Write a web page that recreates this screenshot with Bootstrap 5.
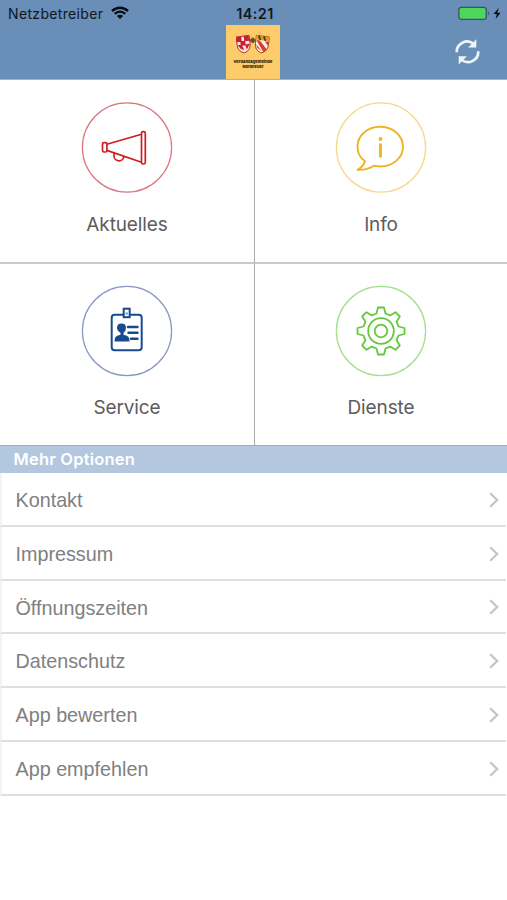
<!DOCTYPE html>
<html lang="de">
<head>
<meta charset="utf-8">
<meta name="viewport" content="width=device-width, initial-scale=1">
<title>Start</title>
<link href="https://cdn.jsdelivr.net/npm/bootstrap@5.3.0/dist/css/bootstrap.min.css" rel="stylesheet">
<style>
body{font-family:Inter,"Liberation Sans",sans-serif;background:#fff;height:900px;overflow:hidden}
svg{display:block;flex:none}
.app-head{height:80px;background:#698fb8;border-bottom:1px solid #a9b3c0}
.statusline{height:25px;padding:3px 5px 0 8px;font-size:14px;line-height:22px;color:#10161d}
.side{flex:1 1 0;min-width:0}
.status-icon{margin-top:3px}
.carrier{letter-spacing:.34px}
.clock{font-weight:600;font-size:14.4px;letter-spacing:.4px}
.crest{width:54px;height:54px;background:#fdcb69;font-size:4px;line-height:5px;font-weight:800;color:#1c1408;padding-top:9px;margin-right:1px}
.crest svg{margin-bottom:5px}
.refresh{margin:13px 26px 0 0}
.tiles{display:grid;grid-template-columns:255px 1fr;grid-template-rows:184px 182px}
.tile{height:100%;padding-top:22px;color:#5c5c5c;font-size:19px;letter-spacing:-.12px;border-bottom:2px solid #c9c9c9}
.tile.lower{padding-top:21px;border-bottom:1px solid #aaa}
.tile.west{border-right:1px solid #adadad}
.tile span{line-height:24px;margin-top:19px}
.section-title{height:27px;background:#b3c7df;color:#fff;font-size:16.5px;font-weight:600;line-height:27px;padding-left:13.500px;letter-spacing:.2px}
.option{height:53.75px;border:0;border-bottom:2px solid #e0e0e0;border-left:2px solid #f3f3f3;padding:4px 7px 0 13.5px;color:#808080;font-family:"Liberation Sans",Arial,sans-serif;font-size:19.75px;background:#fff;margin-right:1px}
.option svg{margin-bottom:2px}
</style>
</head>
<body>
<header class="app-head">
  <div class="statusline d-flex">
    <div class="side d-flex"><span class="carrier">Netzbetreiber</span>
      <svg class="ms-2 status-icon" width="18" height="13" viewBox="0 0 18 13" fill="none" stroke="#080c10" stroke-width="2.3"><path d="M1 5.100a11.200 11.200 0 0 1 16 0M3.800 7.900a7.300 7.300 0 0 1 10.400 0"/><path d="M6 10a4.200 4.200 0 0 1 6 0l-3 3z" fill="#080c10" stroke="none"/></svg>
    </div>
    <span class="clock">14:21</span>
    <div class="side d-flex justify-content-end">
      <svg class="status-icon" width="44" height="15" viewBox="0 0 44 15"><rect x=".8" y="1.300" width="27.500" height="12" rx="2.500" fill="#4cd65c" stroke="#38536f" stroke-width="1.300"/><path d="M30 5.200q2 2.100 0 4.200z" fill="#38536f"/><path d="M41 1.700L35.500 8h3.300l-1.200 5 5-6.300h-3.400z" fill="#080c10"/></svg>
    </div>
  </div>
  <div class="d-flex">
    <div class="side"></div>
    <div class="crest d-flex flex-column align-items-center text-nowrap">
      <svg width="34" height="20" viewBox="0 0 34 19" preserveAspectRatio="none">
        <g transform="rotate(-7 8 9)"><path d="M1 2h13v8q0 6-6.500 8Q1 16 1 10z" fill="#f8e8df" stroke="#b3272d" stroke-width=".9"/><path d="M1 2h5v5H1zM8.500 2h5v5h-5zM4.500 6.500h5V11h-5zM1.500 10h4l2 5-3-1zM9 10h5l-4 5z" fill="#c91f30"/></g>
        <path d="M13 6l4-3 3 3-3 3z" fill="#6b5424"/>
        <g transform="rotate(7 26 9)"><path d="M19.500 2h13v8q0 6-6.500 8-6.500-2-6.500-8z" fill="#f8eee4" stroke="#a33b22" stroke-width=".9"/><path d="M19.500 2h13v4h-13z" fill="#dc9d22"/><path d="M22 2l2 4M27 2l2 4" stroke="#41351e" stroke-width="1.600"/><path d="M20 6.500h3.500l8 7.500-3 3zM28.500 6.500H32v4zM20.500 10.500l6 6-5-3z" fill="#dc3c2c"/></g>
      </svg>
      <span>Verbandsgemeinde</span><span>Nordheuer</span>
    </div>
    <div class="side d-flex justify-content-end">
      <svg class="refresh" width="27" height="28" viewBox="0 0 27 28" fill="none" stroke="#eef3fa" stroke-width="2.700"><path d="M2.700 14.200A10.400 10.400 0 0 1 19.500 5.800M24.300 13.200A10.400 10.400 0 0 1 7.700 22"/><path d="M22.300 1.300v8.200h-8.200zM4.700 26.500v-8.200h8.200z" fill="#eef3fa" stroke="none"/></svg>
    </div>
  </div>
</header>
<main>
  <div class="tiles">
    <div class="tile west d-flex flex-column align-items-center">
      <svg width="92" height="92" viewBox="-46 -46 92 92" fill="none" stroke="#cf1d22" stroke-width="1.700" stroke-linejoin="round"><circle cy="-.5" r="44.600" stroke="#dc7580" stroke-width="1.200"/><rect x="-24.500" y="-5.400" width="4.400" height="9.400" rx="1.400"/><path d="M-20.100-3.800L14.500-13.800M-20.100 2.400L14.500 14.200"/><rect x="14.500" y="-16.300" width="3.800" height="32.300" rx="1.600"/><path d="M-13 5v2.200a5 5 0 0 0 9.900 1.400"/></svg>
      <span>Aktuelles</span></div>
    <div class="tile d-flex flex-column align-items-center">
      <svg width="92" height="92" viewBox="-46 -46 92 92" fill="none" stroke="#edb323" stroke-width="1.900" stroke-linejoin="round"><circle cy="-.5" r="44.600" stroke="#f7d98d" stroke-width="1.300"/><path d="M-16 13.200C-21.500 9.500-23.500 4.500-23.500-1.200C-23.500-12.500-13.700-21.200-1-21.200S22-12.500 22-1.200S11.700 18.500-1 18.500Q-4 18.500-7 17.700Q-15 22.500-23.500 21.800Q-17.500 18.500-16 13.200Z"/><path d="M-.5-4.500V9.500" stroke-width="2.800"/><circle cx="-.5" cy="-9" r="1.900" fill="#edb323" stroke="none"/></svg>
      <span>Info</span></div>
    <div class="tile lower west d-flex flex-column align-items-center">
      <svg width="92" height="92" viewBox="-46 -46 92 92" fill="none" stroke="#174b8e" stroke-width="2"><circle r="44.600" stroke="#8798c5" stroke-width="1.200"/><rect x="-15.300" y="-16.300" width="30" height="35.500" rx="3"/><rect x="-3.300" y="-22.300" width="6" height="8.500" fill="#fff"/><path d="M-1.500-18.500H1v2H-1.500z" fill="#8798c5" stroke="none"/><path d="M1-4H10.500M1.500 1.800H10.500M4 7.700H10.500" stroke-width="2.400" stroke-linecap="round"/><path d="M-10-3.200q0-4.300 4.500-4.300t4.500 4.300q0 3-2.500 5v2q4 1 5 2.300t1 4.400h-15q0-3.100 1-4.400t5-2.300v-2q-3.500-2-3.500-5z" fill="#174b8e" stroke="none"/></svg>
      <span>Service</span></div>
    <div class="tile lower d-flex flex-column align-items-center">
      <svg width="92" height="92" viewBox="-46 -46 92 92" fill="none" stroke="#64c83b" stroke-width="1.800" stroke-linejoin="round"><circle r="44.600" stroke="#a4df8c" stroke-width="1.300"/><path d="M-4.500-17.500L-3-23.500H3L4.500-17.500L9.200-15.600L14.500-18.800L18.800-14.500L15.600-9.200L17.500-4.500L23.500-3V3L17.500 4.500L15.600 9.200L18.800 14.500L14.500 18.800L9.200 15.600L4.500 17.500L3 23.500H-3L-4.500 17.500L-9.200 15.600L-14.500 18.800L-18.800 14.500L-15.600 9.200L-17.500 4.500L-23.500 3V-3L-17.500-4.500L-15.600-9.200L-18.800-14.500L-14.500-18.800L-9.200-15.600Z"/><circle r="12.800"/><circle r="6.300"/></svg>
      <span>Dienste</span></div>
  </div>
  <div class="section-title">Mehr Optionen</div>
  <div class="list-group rounded-0">
    <a class="option list-group-item d-flex align-items-center justify-content-between">Kontakt<svg width="10" height="16" viewBox="0 0 10 16" fill="none" stroke="#c4c4c4" stroke-width="2.200"><path d="M1.200 1.200L8.200 8L1.200 14.800"/></svg></a>
    <a class="option list-group-item d-flex align-items-center justify-content-between">Impressum<svg width="10" height="16" viewBox="0 0 10 16" fill="none" stroke="#c4c4c4" stroke-width="2.200"><path d="M1.200 1.200L8.200 8L1.200 14.800"/></svg></a>
    <a class="option list-group-item d-flex align-items-center justify-content-between">Öffnungszeiten<svg width="10" height="16" viewBox="0 0 10 16" fill="none" stroke="#c4c4c4" stroke-width="2.200"><path d="M1.200 1.200L8.200 8L1.200 14.800"/></svg></a>
    <a class="option list-group-item d-flex align-items-center justify-content-between">Datenschutz<svg width="10" height="16" viewBox="0 0 10 16" fill="none" stroke="#c4c4c4" stroke-width="2.200"><path d="M1.200 1.200L8.200 8L1.200 14.800"/></svg></a>
    <a class="option list-group-item d-flex align-items-center justify-content-between">App bewerten<svg width="10" height="16" viewBox="0 0 10 16" fill="none" stroke="#c4c4c4" stroke-width="2.200"><path d="M1.200 1.200L8.200 8L1.200 14.800"/></svg></a>
    <a class="option list-group-item d-flex align-items-center justify-content-between">App empfehlen<svg width="10" height="16" viewBox="0 0 10 16" fill="none" stroke="#c4c4c4" stroke-width="2.200"><path d="M1.200 1.200L8.200 8L1.200 14.800"/></svg></a>
  </div>
</main>
<script src="https://cdn.jsdelivr.net/npm/bootstrap@5.3.0/dist/js/bootstrap.bundle.min.js"></script>
</body>
</html>
